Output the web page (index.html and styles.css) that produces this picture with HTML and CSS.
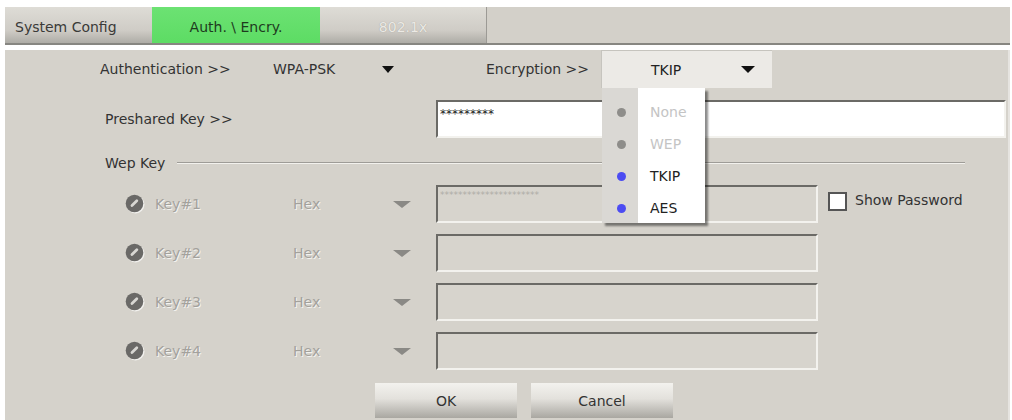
FILE: index.html
```html
<!DOCTYPE html>
<html lang="en">
<head>
  <meta charset="UTF-8">
  <title>Auth. \ Encry.</title>
  <link rel="stylesheet" href="styles.css">
</head>
<body>

<div class="window">
  <div class="tab-bar">
    <div class="tab tab-system">System Config</div>
    <div class="tab tab-active">Auth. \ Encry.</div>
    <div class="tab tab-disabled">802.1x</div>
  </div>

  <div class="panel">
    <!-- Authentication / Encryption -->
    <div class="auth-row">
      <span class="label-auth">Authentication &gt;&gt;</span>
      <span class="auth-value">WPA-PSK</span>
      <span class="arrow"></span>
      <span class="label-enc">Encryption &gt;&gt;</span>
      <div class="select-box">
        <span class="select-value">TKIP</span>
        <span class="arrow arrow-enc"></span>

        <ul class="dropdown">
          <li class="item disabled"><span class="dot"></span>None</li>
          <li class="item disabled"><span class="dot"></span>WEP</li>
          <li class="item"><span class="dot"></span>TKIP</li>
          <li class="item"><span class="dot"></span>AES</li>
        </ul>
      </div>
    </div>

    <!-- Preshared key -->
    <div class="psk-row">
      <span class="label-psk">Preshared Key &gt;&gt;</span>
      <div class="field field-psk">*********</div>
    </div>

    <!-- Wep key group -->
    <div class="wep-legend">
      <span>Wep Key</span>
      <span class="wep-line"></span>
    </div>

    <div class="key-row first">
      <svg class="radio" width="20" height="20" viewBox="0 0 20 20"><circle cx="10.5" cy="10.5" r="9" fill="#f2f1ee"/><circle cx="9.5" cy="9.5" r="8.8" fill="#6a6967"/><path d="M7 11.5 L11.8 6.8" stroke="#d8d7d3" stroke-width="2.8" stroke-linecap="round"/></svg>
      <span class="key-label">Key#1</span>
      <span class="key-type">Hex</span>
      <span class="arrow arrow-grey"></span>
      <div class="field field-key">**********************</div>
      <span class="checkbox"></span>
      <span class="check-label">Show Password</span>
    </div>
    <div class="key-row">
      <svg class="radio" width="20" height="20" viewBox="0 0 20 20"><circle cx="10.5" cy="10.5" r="9" fill="#f2f1ee"/><circle cx="9.5" cy="9.5" r="8.8" fill="#6a6967"/><path d="M7 11.5 L11.8 6.8" stroke="#d8d7d3" stroke-width="2.8" stroke-linecap="round"/></svg>
      <span class="key-label">Key#2</span>
      <span class="key-type">Hex</span>
      <span class="arrow arrow-grey"></span>
      <div class="field field-key"></div>
    </div>
    <div class="key-row">
      <svg class="radio" width="20" height="20" viewBox="0 0 20 20"><circle cx="10.5" cy="10.5" r="9" fill="#f2f1ee"/><circle cx="9.5" cy="9.5" r="8.8" fill="#6a6967"/><path d="M7 11.5 L11.8 6.8" stroke="#d8d7d3" stroke-width="2.8" stroke-linecap="round"/></svg>
      <span class="key-label">Key#3</span>
      <span class="key-type">Hex</span>
      <span class="arrow arrow-grey"></span>
      <div class="field field-key"></div>
    </div>
    <div class="key-row">
      <svg class="radio" width="20" height="20" viewBox="0 0 20 20"><circle cx="10.5" cy="10.5" r="9" fill="#f2f1ee"/><circle cx="9.5" cy="9.5" r="8.8" fill="#6a6967"/><path d="M7 11.5 L11.8 6.8" stroke="#d8d7d3" stroke-width="2.8" stroke-linecap="round"/></svg>
      <span class="key-label">Key#4</span>
      <span class="key-type">Hex</span>
      <span class="arrow arrow-grey"></span>
      <div class="field field-key"></div>
    </div>

    <!-- Buttons -->
    <div class="button-row">
      <button class="button">OK</button>
      <button class="button">Cancel</button>
    </div>
  </div>
</div>

</body>
</html>
```

FILE: styles.css
```css
/* Page */
body {
  margin: 0;
  background: #fff;
  font-family: "DejaVu Sans", Tahoma, sans-serif;
  font-size: 14px;
  color: #333;
}
.window {
  margin: 7px 0 0 5px;
  width: 1005px;
}
/* Tabs */
.tab-bar {
  display: flex;
  height: 36px;
  background: #d3d0c9;
  border-bottom: 2px solid #878681;
}
.tab {
  box-sizing: border-box;
  height: 36px;
  padding-top: 3px;
  display: flex;
  align-items: center;
}
.tab-system {
  width: 147px;
  padding-left: 10px;
  color: #3a3a38;
  background: linear-gradient(#dedcd6, #cfccc6 65%, #aeaca6);
}
.tab-active {
  width: 168px;
  justify-content: center;
  background: linear-gradient(#6ce273, #5ddc64);
  color: #1e3a1e;
}
.tab-disabled {
  width: 167px;
  justify-content: center;
  color: #eceae5;
  text-shadow: 0 0 1px #9a9893;
  background: linear-gradient(#dedcd6, #cfccc6 65%, #aeaca6);
  border-right: 1px solid #9c9a95;
}
/* Main panel */
.panel {
  height: 373px;
  background: #d5d2cb;
  border-right: 2px solid #e6e4e0;
}
.arrow {
  width: 0;
  height: 0;
  border-left: 6px solid transparent;
  border-right: 6px solid transparent;
  border-top: 7px solid #111;
}
.auth-row {
  display: flex;
  align-items: center;
  height: 38px;
  margin-top: 5px;
}
.label-auth {
  margin-left: 95px;
  width: 173px;
}
.auth-value {
  width: 109px;
}
.label-enc {
  margin-left: 92px;
  width: 115px;
}
.select-box {
  position: relative;
  box-sizing: border-box;
  width: 171px;
  height: 38px;
  display: flex;
  align-items: center;
  padding-left: 49px;
  background: #eceae6;
  border-top: 1px solid #c6c4be;
  border-left: 1px solid #c6c4be;
}
.select-value {
  width: 90px;
  color: #222;
}
.arrow-enc {
  border-left-width: 7px;
  border-right-width: 7px;
}
/* Liste déroulante */
.dropdown {
  position: absolute;
  top: 37px;
  left: 0;
  width: 103px;
  margin: 0;
  padding: 8px 0 0;
  list-style: none;
  height: 135px;
  box-sizing: border-box;
  background: linear-gradient(90deg, #dad8d4 36px, #fff 36px);
  box-shadow: 3px 3px 2px rgba(0, 0, 0, 0.45);
}
.item {
  display: flex;
  align-items: center;
  height: 32px;
  color: #222;
}
.dot {
  width: 9px;
  height: 9px;
  border-radius: 50%;
  background: #4c4cf2;
  margin: 0 24px 0 15px;
}
.item.disabled {
  color: #c4c4c4;
}
.item.disabled .dot {
  background: #8e8d8a;
}
/* Champs */
.field {
  box-sizing: border-box;
  height: 38px;
  border-top: 2px solid #6b6a66;
  border-left: 2px solid #6b6a66;
  border-bottom: 2px solid #f3f2ee;
  border-right: 2px solid #f3f2ee;
  overflow: hidden;
  white-space: nowrap;
}
.psk-row {
  display: flex;
  align-items: center;
  height: 38px;
  margin-top: 12px;
}
.label-psk {
  margin-left: 100px;
  width: 331px;
}
.field-psk {
  width: 570px;
  background: #fff;
  font-size: 12px;
  line-height: 14px;
  padding: 5px 0 0 2px;
  color: #222;
}
.wep-legend {
  display: flex;
  align-items: center;
  height: 20px;
  margin-top: 15px;
  padding-left: 100px;
}
.wep-line {
  width: 788px;
  margin-left: 12px;
  border-top: 1px solid #9e9c97;
  border-bottom: 1px solid #f2f1ed;
}
/* Lignes des clés WEP */
.key-row {
  display: flex;
  align-items: center;
  height: 38px;
  margin-top: 11px;
}
.key-row.first {
  margin-top: 12px;
}
.radio {
  margin-left: 120px;
  flex: none;
}
.key-label, .key-type {
  color: #a3a19c;
  text-shadow: 1px 1px 0 #f4f3ef;
}
.key-label {
  margin-left: 10px;
  width: 138px;
}
.key-type {
  width: 100px;
}
.arrow-grey {
  border-left-width: 9px;
  border-right-width: 9px;
  border-top-color: #8a8985;
  margin-right: 25px;
}
.field-key {
  width: 382px;
  background: #d7d4cd;
  font-size: 9px;
  line-height: 10px;
  padding: 3px 0 0 2px;
  color: #aeaca7;
}
.checkbox {
  box-sizing: border-box;
  width: 19px;
  height: 19px;
  margin-left: 10px;
  background: #fff;
  border: 2px solid #555;
  align-self: flex-start;
  margin-top: 7px;
}
.check-label {
  margin-left: 8px;
  color: #333;
  align-self: flex-start;
  margin-top: 7px;
}
/* Boutons */
.button-row {
  display: flex;
  gap: 14px;
  margin-top: 13px;
  padding-left: 370px;
}
.button {
  width: 142px;
  height: 35px;
  border: none;
  padding: 0;
  font-family: inherit;
  font-size: 14px;
  color: #333;
  background: linear-gradient(#f3f2ee, #e3e1dc 45%, #a9a7a1);
}
```
